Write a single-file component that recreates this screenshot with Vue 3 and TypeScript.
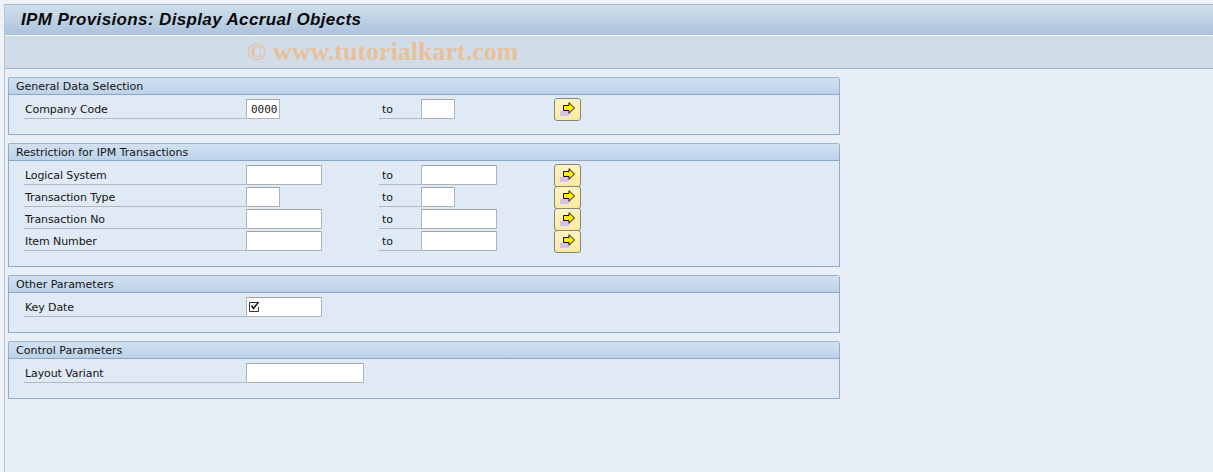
<script setup lang="ts">
interface Row {
  label: string
  width: number
  value?: string
  toWidth?: number
  required?: boolean
}

interface Section {
  title: string
  rows: Row[]
}

const sections: Section[] = [
  {
    title: 'General Data Selection',
    rows: [{ label: 'Company Code', width: 34, value: '0000', toWidth: 34 }]
  },
  {
    title: 'Restriction for IPM Transactions',
    rows: [
      { label: 'Logical System', width: 76, toWidth: 76 },
      { label: 'Transaction Type', width: 34, toWidth: 34 },
      { label: 'Transaction No', width: 76, toWidth: 76 },
      { label: 'Item Number', width: 76, toWidth: 76 }
    ]
  },
  {
    title: 'Other Parameters',
    rows: [{ label: 'Key Date', width: 76, required: true }]
  },
  {
    title: 'Control Parameters',
    rows: [{ label: 'Layout Variant', width: 118 }]
  }
]
</script>

<template>
  <div class="screen">
    <div class="top-edge"></div>
    <div class="window">
      <header class="title-bar">
        <h1>IPM Provisions: Display Accrual Objects</h1>
      </header>
      <div class="toolbar">
        <span class="watermark">© www.tutorialkart.com</span>
      </div>
      <main class="content">
        <section v-for="section in sections" :key="section.title" class="panel">
          <div class="panel-head">{{ section.title }}</div>
          <div class="panel-body">
            <div v-for="row in section.rows" :key="row.label" class="row">
              <span class="label">{{ row.label }}</span>
              <div class="field" :style="{ width: row.width + 'px' }">
                {{ row.value }}
                <svg v-if="row.required" class="check" viewBox="0 0 12 12" width="12" height="12">
                  <path d="M9.500 1.500H1.500v9h9V6" fill="none" stroke="#333" stroke-width="1" />
                  <path d="M3.500 4.500l2 3 5-6.500" fill="none" stroke="#111" stroke-width="1.400" />
                </svg>
              </div>
              <template v-if="row.toWidth">
                <span class="to">to</span>
                <div class="field" :style="{ width: row.toWidth + 'px' }"></div>
                <button class="more" type="button">
                  <svg viewBox="0 0 19 16" width="19" height="16">
                    <rect x="1.500" y="8.500" width="10" height="6" fill="#d3c3e0" stroke="#efe9e4" />
                    <path d="M5.500 3.500H11V.7L16.500 6 11 11.300V8.500H5.500z" fill="#ffeb00" stroke="#111" stroke-width="1" />
                  </svg>
                </button>
              </template>
            </div>
          </div>
        </section>
      </main>
    </div>
  </div>
</template>

<style scoped>
.screen {
  width: 1213px;
  height: 472px;
  overflow: hidden;
  background: #eef1f5;
  font-family: "DejaVu Sans", "Noto Sans", sans-serif;
  color: #141414;
}

.top-edge {
  height: 4px;
}

.window {
  height: 468px;
  margin-left: 4px;
  border-left: 1px solid #b4c4d6;
  border-top: 1px solid #a7b4c6;
  background: #e8eff7;
}

.title-bar {
  height: 30px;
  padding-left: 16px;
  display: flex;
  align-items: center;
  background: linear-gradient(#cfdfec, #adc3dc);
  border-bottom: 1px solid #f2f6fa;
}

.title-bar h1 {
  margin: 0;
  font-family: "Liberation Sans", Arial, sans-serif;
  font-size: 17px;
  letter-spacing: 0.36px;
  font-weight: bold;
  font-style: italic;
  color: #0a0a0a;
}

.toolbar {
  height: 32px;
  padding-left: 242px;
  display: flex;
  align-items: center;
  background: #d0dde8;
  border-bottom: 1px solid #a5b6ca;
}

.watermark {
  font-family: "Liberation Serif", serif;
  font-size: 26px;
  font-weight: bold;
  color: #e8c09a;
}

.content {
  padding: 8px 0 0 3px;
  display: flex;
  flex-direction: column;
  gap: 8px;
}

.panel {
  width: 832px;
  box-sizing: border-box;
  border: 1px solid #8eacc9;
  border-top-color: #9cb4cc;
  border-radius: 2px 3px 0 0;
  background: #dfeaf4;
}

.panel-head {
  height: 16px;
  line-height: 17px;
  padding-left: 7px;
  font-size: 11px;
  background: linear-gradient(#d2e1f0, #bcd2e9);
  border-bottom: 1px solid #88a6c6;
}

.panel-body {
  padding: 4px 0 15px;
  display: flex;
  flex-direction: column;
  gap: 2px;
}

.row {
  height: 20px;
  display: grid;
  grid-template-columns: 222px 133px 42px 133px 27px;
  grid-template-rows: 20px;
  padding-left: 15px;
}

.label {
  box-sizing: border-box;
  height: 20px;
  padding-left: 1px;
  line-height: 21px;
  font-size: 11px;
  letter-spacing: -0.1px;
  border-bottom: 1px solid #b3b8bc;
}

.field {
  box-sizing: border-box;
  display: flex;
  align-items: center;
  padding-left: 4px;
  background: #fff;
  border: 1px solid #b0b4b8;
  border-top-color: #a0a4a8;
  border-radius: 1px;
  font-family: "DejaVu Sans Mono", monospace;
  font-size: 11px;
  color: #222;
}

.check {
  margin-left: -3px;
}

.to {
  box-sizing: border-box;
  height: 20px;
  padding-left: 3px;
  line-height: 21px;
  font-size: 11px;
  border-bottom: 1px solid #b3b8bc;
}

.more {
  height: 23px;
  margin-top: -1px;
  padding: 0;
  display: flex;
  align-items: center;
  justify-content: center;
  background: linear-gradient(#fdf5c4, #fde99c);
  border: 1px solid #85857a;
  border-radius: 3px;
  position: relative;
}
</style>

<style>
html,
body {
  margin: 0;
  background: #e8eff7;
}
</style>
